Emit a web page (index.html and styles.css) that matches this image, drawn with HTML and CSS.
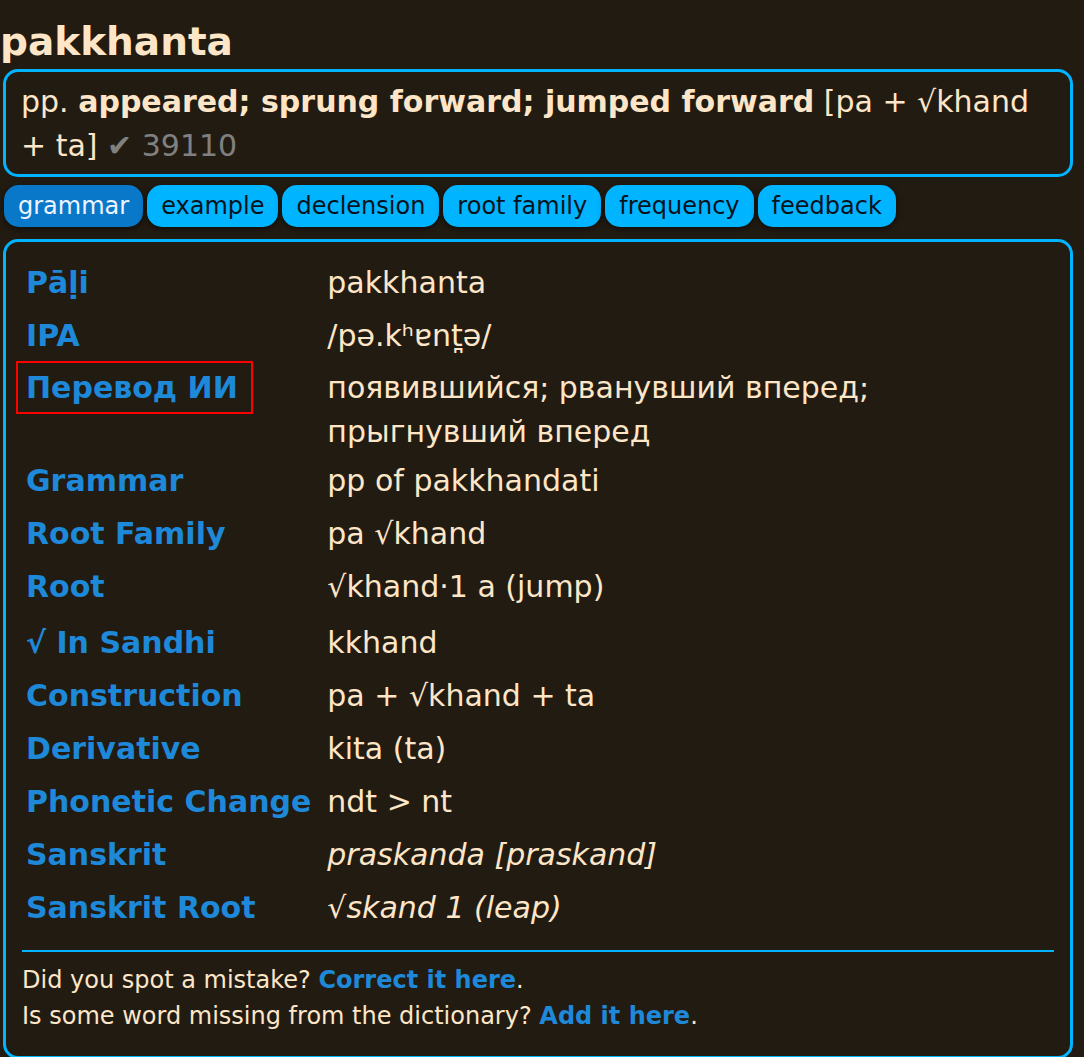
FILE: index.html
```html
<!DOCTYPE html>
<html lang="en">
<head>
<meta charset="utf-8">
<title>pakkhanta</title>
<link rel="stylesheet" href="styles.css">
</head>
<body>
<h1 class="title">pakkhanta</h1>
<div class="summary">pp. <b>appeared; sprung forward; jumped forward</b> [pa + √khand + ta] <span class="muted">✔ 39110</span></div>
<nav class="tabs">
  <span class="tab active">grammar</span>
  <span class="tab">example</span>
  <span class="tab">declension</span>
  <span class="tab">root family</span>
  <span class="tab">frequency</span>
  <span class="tab">feedback</span>
</nav>
<div class="panel">
  <table class="grammar">
    <tr><th>Pāḷi</th><td>pakkhanta</td></tr>
    <tr><th>IPA</th><td>/pə.kʰɐnt̪ə/</td></tr>
    <tr class="multi"><th><span class="mark">Перевод ИИ</span></th><td>появившийся; рванувший вперед; прыгнувший вперед</td></tr>
    <tr><th>Grammar</th><td>pp of pakkhandati</td></tr>
    <tr><th>Root Family</th><td>pa √khand</td></tr>
    <tr class="tall"><th>Root</th><td>√khand·1 a (jump)</td></tr>
    <tr><th>√ In Sandhi</th><td>kkhand</td></tr>
    <tr><th>Construction</th><td>pa + √khand + ta</td></tr>
    <tr><th>Derivative</th><td>kita (ta)</td></tr>
    <tr><th>Phonetic Change</th><td>ndt &gt; nt</td></tr>
    <tr><th>Sanskrit</th><td><i>praskanda [praskand]</i></td></tr>
    <tr><th>Sanskrit Root</th><td><i>√skand 1 (leap)</i></td></tr>
  </table>
  <div class="rule"></div>
  <p class="note">Did you spot a mistake? <a class="link">Correct it here</a>.</p>
  <p class="note">Is some word missing from the dictionary? <a class="link">Add it here</a>.</p>
</div>
</body>
</html>
```

FILE: styles.css
```css
html, body {
  margin: 0;
  padding: 0;
  background: #221b12;
}
body {
  font-family: "DejaVu Sans", sans-serif;
  color: #fde6c8;
  font-size: 30px;
}
.title {
  font-size: 39px;
  font-weight: bold;
  line-height: 46px;
  margin: 19px 0 4px 0;
  color: #fde6c8;
}
.summary {
  margin-left: 3px;
  width: 1070px;
  box-sizing: border-box;
  border: 3px solid #00b4ff;
  border-radius: 15px;
  padding: 8px 14px 6px 15px;
  line-height: 44px;
}
.summary b { font-weight: bold; }
.muted { color: #808080; }
.tabs {
  display: flex;
  gap: 4px;
  margin: 8px 0 0 4px;
}
.tab {
  font-size: 24px;
  line-height: 36px;
  padding: 3px 14px;
  border-radius: 15px;
  background: #00b4ff;
  color: #06121c;
  box-shadow: 0 2px 6px rgba(0, 0, 0, 0.55);
}
.tab.active {
  background: #0a78c8;
  color: #eef4ff;
}
.panel {
  margin: 12px 0 0 3px;
  width: 1070px;
  box-sizing: border-box;
  border: 3px solid #00b4ff;
  border-radius: 15px;
  padding: 14px 16px 22px 16px;
}
.grammar {
  border-collapse: collapse;
  border-spacing: 0;
}
.grammar th, .grammar td {
  line-height: 44px;
  vertical-align: top;
  text-align: left;
  padding: 4.5px 0;
}
.grammar th {
  font-weight: bold;
  color: #1e88d9;
  white-space: nowrap;
  padding-left: 4px;
  padding-right: 16px;
}
.grammar td { color: #fde6c8; }
.grammar tr.multi th, .grammar tr.multi td { padding-top: 4px; padding-bottom: 0; }
.grammar tr.tall th { padding-bottom: 8px; }
.mark {
  position: relative;
  display: inline-block;
}
.mark::after {
  content: "";
  position: absolute;
  top: -5px;
  bottom: -4px;
  left: -10px;
  right: -15px;
  border: 2px solid #ff0000;
}
.rule {
  height: 2px;
  background: #00b4ff;
  margin: 15px 0 10px 0;
}
.note {
  margin: 0;
  font-size: 24px;
  line-height: 36px;
  color: #fde6c8;
}
.link {
  color: #1e88d9;
  font-weight: bold;
}
```
